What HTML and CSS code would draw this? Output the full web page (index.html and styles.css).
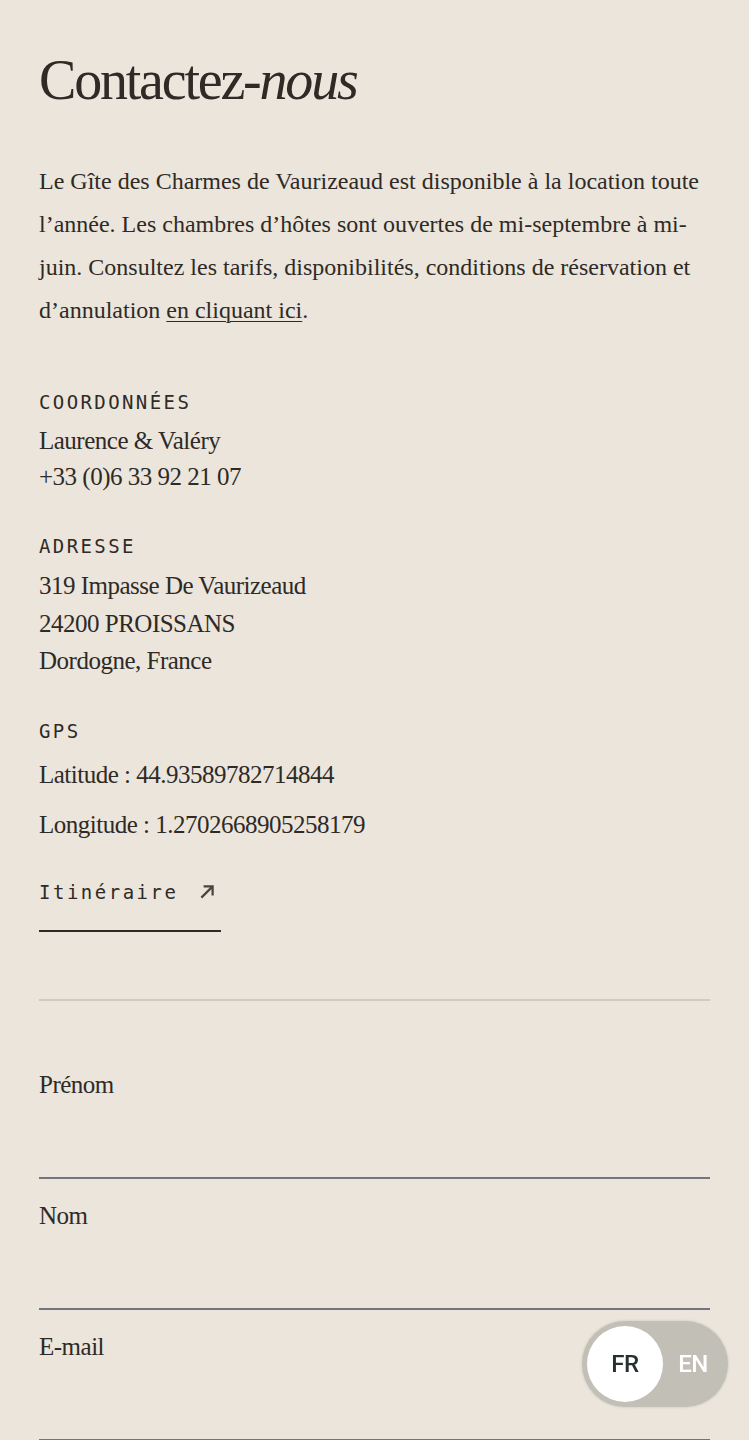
FILE: index.html
```html
<!DOCTYPE html>
<html lang="fr">
<head>
    <meta charset="UTF-8">
    <meta name="viewport" content="width=device-width, initial-scale=1.0">
    <title>Contactez-nous</title>
    <link rel="stylesheet" href="styles.css">
</head>
<body>
    <main class="contact">
        <h1 class="title">Contactez-<em>nous</em></h1>
        <p class="intro">Le Gîte des Charmes de Vaurizeaud est disponible à la location toute l’année. Les chambres d’hôtes sont ouvertes de mi-septembre à mi-juin. Consultez les tarifs, disponibilités, conditions de réservation et d’annulation <a href="#">en cliquant ici</a>.</p>

        <div class="block">
            <h3 class="label">Coordonnées</h3>
            <p class="info">Laurence &amp; Valéry<br>+33 (0)6 33 92 21 07</p>
        </div>

        <div class="block">
            <h3 class="label">Adresse</h3>
            <p class="info address">319 Impasse De Vaurizeaud<br>24200 PROISSANS<br>Dordogne, France</p>
        </div>

        <div class="block">
            <h3 class="label">GPS</h3>
            <p class="info gps">Latitude : 44.93589782714844</p>
            <p class="info gps">Longitude : 1.2702668905258179</p>
        </div>

        <a class="route" href="#">Itinéraire
            <svg class="arrow" width="18" height="18" viewBox="0 0 16 16"><path d="M3 13 L13 3 M5 3 H13 V11" fill="none" stroke="#4a4540" stroke-width="2"/></svg>
        </a>

        <hr class="sep">

        <form class="form">
            <div class="field">
                <label for="prenom">Prénom</label>
                <input type="text" id="prenom">
            </div>
            <div class="field">
                <label for="nom">Nom</label>
                <input type="text" id="nom">
            </div>
            <div class="field">
                <label for="email">E-mail</label>
                <input type="email" id="email">
            </div>
        </form>
    </main>

    <div class="lang">
        <span class="lang-opt active">FR</span>
        <span class="lang-opt">EN</span>
    </div>
</body>
</html>
```

FILE: styles.css
```css
body {
    margin: 0;
    background-color: #ebe5dc;
    color: #2f2a26;
    font-family: "Liberation Serif", "Times New Roman", serif;
}
.contact {
    padding: 50px 39px 0;
}
.title {
    margin: 0;
    font-size: 56px;
    font-weight: normal;
    line-height: 60px;
    letter-spacing: -2.2px;
}
.title em {
    font-style: italic;
}
.intro {
    margin: 50px 0 0;
    font-size: 24px;
    line-height: 43px;
}
.intro a {
    color: inherit;
    text-decoration: underline;
    text-underline-offset: 3px;
    text-decoration-thickness: 1px;
}
.block {
    margin-top: 39px;
}
.block:first-of-type {
    margin-top: 58px;
}
.label {
    margin: 0 0 9px;
    font-family: "DejaVu Sans Mono", monospace;
    font-size: 19px;
    font-weight: normal;
    line-height: 24px;
    letter-spacing: 2.4px;
    text-transform: uppercase;
}
.info {
    margin: 0;
    font-size: 25px;
    line-height: 36px;
    letter-spacing: -0.5px;
}
.address {
    line-height: 37.5px;
}
.gps {
    line-height: 50px;
}
.gps:first-of-type {
    margin-top: -2px;
}
.route {
    display: inline-flex;
    align-items: center;
    gap: 20px;
    margin-top: 30px;
    padding-bottom: 26px;
    padding-right: 5px;
    border-bottom: 2px solid #2f2a26;
    color: inherit;
    text-decoration: none;
    font-family: "DejaVu Sans Mono", monospace;
    font-size: 19px;
    line-height: 24px;
    letter-spacing: 2.5px;
}
.sep {
    margin: 67px 0 0;
    border: none;
    border-top: 2px solid #d2cabb;
}
.form {
    padding-top: 69px;
}
.field {
    display: flex;
    flex-direction: column;
    margin-bottom: 22px;
}
.field label {
    font-size: 25px;
    line-height: 30px;
    letter-spacing: -0.5px;
}
.field input {
    height: 77px;
    padding: 0;
    border: none;
    border-bottom: 2px solid #70767b;
    background: transparent;
    font: inherit;
}
.lang {
    position: fixed;
    right: 21px;
    bottom: 33px;
    display: flex;
    align-items: center;
    width: 146px;
    height: 86px;
    padding: 0 5px;
    box-sizing: border-box;
    border-radius: 43px;
    background: #c2c0b6;
    box-shadow: 0 0 3px rgba(0, 0, 0, 0.15);
    font-family: Roboto, "Liberation Sans", sans-serif;
    font-size: 24px;
    font-weight: 500;
}
.lang-opt {
    display: flex;
    align-items: center;
    justify-content: center;
    width: 76px;
    height: 76px;
    color: #fff;
    letter-spacing: -0.5px;
}
.lang-opt:last-child {
    width: 60px;
}
.lang-opt.active {
    border-radius: 50%;
    background: #fff;
    color: #263030;
}
```
